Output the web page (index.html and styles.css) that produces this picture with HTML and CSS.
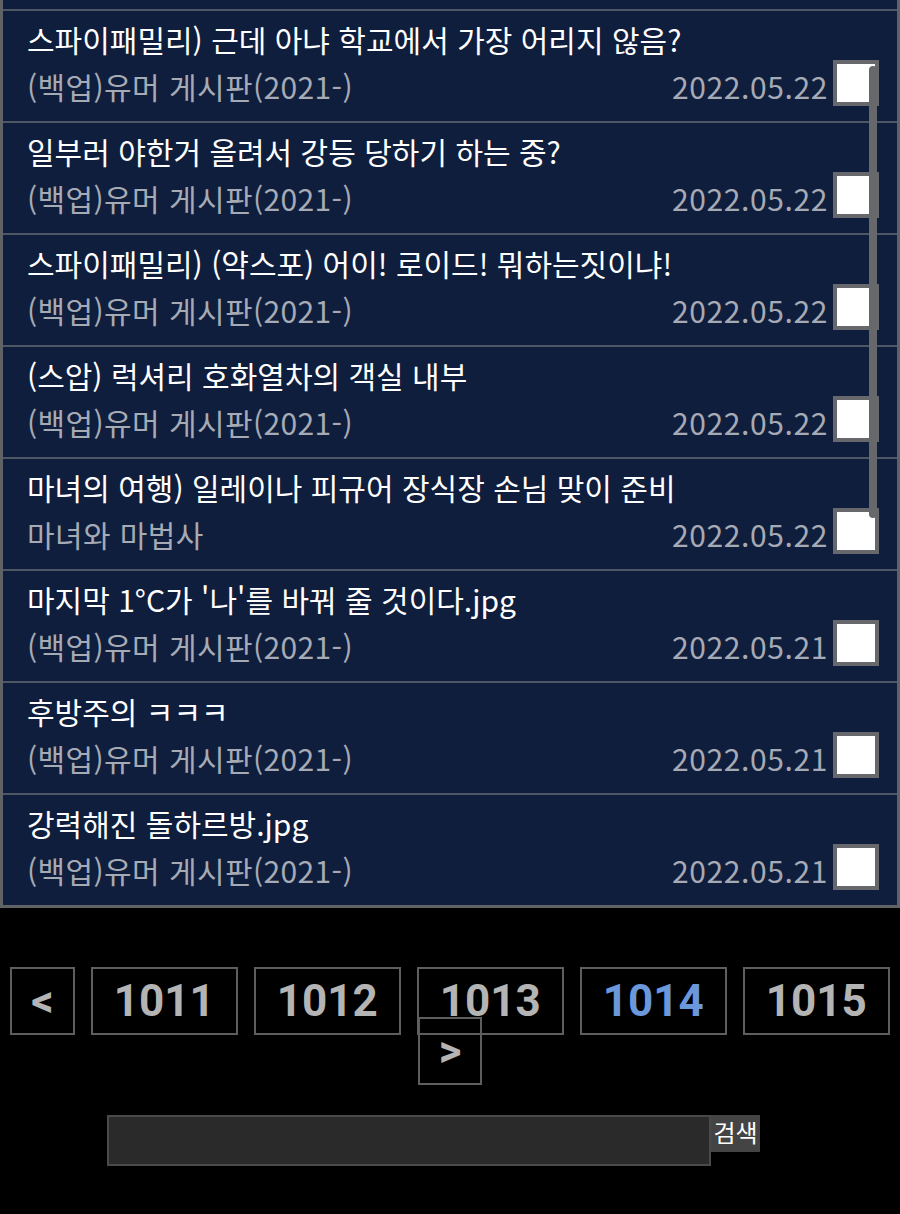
FILE: index.html
```html
<!DOCTYPE html>
<html lang="ko">
<head>
<meta charset="utf-8">
<title>게시판</title>
<link rel="stylesheet" href="styles.css">
</head>
<body>
<div class="board">
  <div class="tail"></div>
  <ul class="list">
    <li class="row">
      <div class="title">스파이패밀리) 근데 아냐 학교에서 가장 어리지 않음?</div>
      <div class="meta"><span class="cat">(백업)유머 게시판(2021-)</span><span class="date">2022.05.22</span><span class="chk"></span></div>
    </li>
    <li class="row">
      <div class="title">일부러 야한거 올려서 강등 당하기 하는 중?</div>
      <div class="meta"><span class="cat">(백업)유머 게시판(2021-)</span><span class="date">2022.05.22</span><span class="chk"></span></div>
    </li>
    <li class="row">
      <div class="title">스파이패밀리) (약스포) 어이! 로이드! 뭐하는짓이냐!</div>
      <div class="meta"><span class="cat">(백업)유머 게시판(2021-)</span><span class="date">2022.05.22</span><span class="chk"></span></div>
    </li>
    <li class="row">
      <div class="title">(스압) 럭셔리 호화열차의 객실 내부</div>
      <div class="meta"><span class="cat">(백업)유머 게시판(2021-)</span><span class="date">2022.05.22</span><span class="chk"></span></div>
    </li>
    <li class="row">
      <div class="title">마녀의 여행) 일레이나 피규어 장식장 손님 맞이 준비</div>
      <div class="meta"><span class="cat">마녀와 마법사</span><span class="date">2022.05.22</span><span class="chk"></span></div>
    </li>
    <li class="row">
      <div class="title">마지막 1°C가 '나'를 바꿔 줄 것이다.jpg</div>
      <div class="meta"><span class="cat">(백업)유머 게시판(2021-)</span><span class="date">2022.05.21</span><span class="chk"></span></div>
    </li>
    <li class="row">
      <div class="title">후방주의 ㅋㅋㅋ</div>
      <div class="meta"><span class="cat">(백업)유머 게시판(2021-)</span><span class="date">2022.05.21</span><span class="chk"></span></div>
    </li>
    <li class="row">
      <div class="title">강력해진 돌하르방.jpg</div>
      <div class="meta"><span class="cat">(백업)유머 게시판(2021-)</span><span class="date">2022.05.21</span><span class="chk"></span></div>
    </li>
  </ul>
  <div class="connector"></div>
</div>
<div class="pager"><span class="pg nav">&lt;</span><wbr><span class="pg">1011</span><wbr><span class="pg">1012</span><wbr><span class="pg">1013</span><wbr><span class="pg cur">1014</span><wbr><span class="pg">1015</span><wbr><span class="pg nav">&gt;</span></div>
<form class="search"><input class="q" type="text"><span class="btn">검색</span></form>
</body>
</html>
```
FILE: styles.css
```css
html, body {
  margin: 0;
  padding: 0;
  background: #000;
}
body {
  font-family: "Noto Sans CJK KR", "Noto Sans", sans-serif;
  width: 900px;
  height: 1214px;
  overflow: hidden;
}
.board {
  position: relative;
  background: #0f1e3c;
  border-left: 3px solid #606266;
  border-right: 3px solid #606266;
  border-bottom: 3px solid #606266;
}
.tail {
  height: 9px;
}
.list {
  list-style: none;
  margin: 0;
  padding: 0;
}
.row {
  height: 110px;
  border-top: 2px solid #4e5563;
  padding: 0 18px 0 24px;
  box-sizing: content-box;
}
.title {
  padding-top: 6px;
  font-size: 30px;
  line-height: 44px;
  color: #fff;
  white-space: nowrap;
}
.meta {
  display: flex;
  align-items: flex-start;
  font-size: 30px;
  line-height: 50px;
  color: #a6aab5;
}
.cat {
  flex: 1;
  white-space: nowrap;
  letter-spacing: 0.4px;
}
.date {
  margin-right: 5px;
  letter-spacing: 0.6px;
}
.chk {
  width: 38px;
  height: 38px;
  margin-top: -1px;
  border: 4px solid #67686b;
  background: #fff;
}
.connector {
  position: absolute;
  left: 866px;
  top: 66px;
  width: 8px;
  height: 452px;
  border-radius: 4px;
  background: #67686b;
}
.pager {
  width: 910px;
  margin: 68px 0 0 -5px;
  text-align: center;
  font-family: Roboto, "Liberation Sans", sans-serif;
  font-weight: bold;
  font-size: 44px;
  line-height: 50px;
  height: 99px;
}
.pg {
  display: inline;
  padding: 6px 21px;
  margin: 0 8px;
  border: 2px solid #5e5e5e;
  color: #b4b4b4;
}
.pg.nav {
  padding: 6px 19px;
}
.pg.cur {
  color: #6b97db;
}
.search {
  display: flex;
  align-items: flex-start;
  margin: 40px 0 0 107px;
}
.q {
  width: 600px;
  height: 47px;
  margin: 0;
  padding: 0;
  border: 2px solid #4a4a4a;
  background: #2a2a2a;
}
.btn {
  width: 49px;
  height: 37px;
  background: #444;
  color: #fff;
  font-size: 24px;
  line-height: 34px;
  text-align: center;
}
```
